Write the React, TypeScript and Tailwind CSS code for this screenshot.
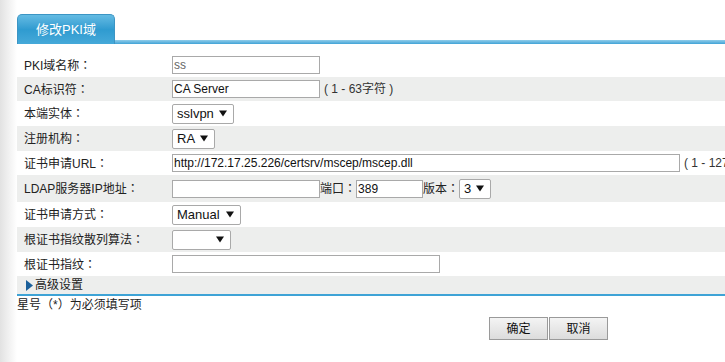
// Edit-PKI-domain form: tab header, striped label/field rows, footer note + buttons.

const FONT = 'font-["Liberation_Sans","Noto_Sans_CJK_SC",sans-serif]'

// fullwidth colon with the glyph centred in its cell, as in the reference
function Colon() {
  return <span className='font-["Noto_Sans_CJK_TC",sans-serif]'>：</span>
}

function Arrow() {
  return (
    <svg width="8" height="7" viewBox="0 0 8 7" className="shrink-0">
      <path d="M0 0.5 H8 L4 6.5 Z" fill="#111" />
    </svg>
  )
}

function Select({ value, width }: { value: string; width: number }) {
  return (
    <div
      className="flex h-[20px] items-center justify-between rounded-[2px] border border-[#a9a9a9] bg-white pl-[4px] pr-[6px] text-[13px] text-[#111]"
      style={{ width }}
    >
      <span>{value}</span>
      <Arrow />
    </div>
  )
}

function Field({ value, width, muted }: { value: string; width: number; muted?: boolean }) {
  return (
    <input
      readOnly
      value={value}
      className={`h-[18px] border border-[#a9a9a9] bg-white px-[1px] text-[12px] outline-none ${FONT} ${
        muted ? 'text-[#666]' : 'text-[#111]'
      }`}
      style={{ width }}
    />
  )
}

function Row({
  label,
  gray,
  h,
  children,
}: {
  label: string
  gray?: boolean
  h: string
  children?: React.ReactNode
}) {
  return (
    <div className={`flex items-center whitespace-nowrap ${h} ${gray ? 'bg-[#edeeed]' : 'bg-white'}`}>
      <div className="w-[155px] shrink-0 pl-[7px] text-[12px] text-[#222]">
        {label}
        <Colon />
      </div>
      <div className="flex items-center text-[12px] text-[#222]">{children}</div>
    </div>
  )
}

export default function App() {
  return (
    <div className={`flex h-[362px] w-[725px] overflow-hidden bg-white ${FONT}`}>
      <div className="w-[17px] shrink-0 bg-gradient-to-r from-[#e2e2e2] to-white" />
      <div className="min-w-0 flex-1 pt-[14px]">
        <div className="flex items-end">
          <div className="flex h-[30px] w-[98px] items-center justify-center rounded-t-[5px] border border-b-0 border-[#3c95c4] bg-gradient-to-b from-[#63bbe3] via-[#2f9bd0] to-[#45a9d9] text-[13px] text-white">
            修改PKI域
          </div>
          <div className="h-[4px] flex-1 bg-gradient-to-b from-[#8fcdea] to-[#3ea3d6]" />
        </div>

        <div className="mt-[9px]">
          <Row label="PKI域名称" h="h-[24px]">
            <Field value="ss" width={148} muted />
          </Row>
          <Row label="CA标识符" gray h="h-[24px]">
            <Field value="CA Server" width={148} />
            <span className="ml-[4px] text-[#333]">( 1 - 63字符 )</span>
          </Row>
          <Row label="本端实体" h="h-[25px]">
            <Select value="sslvpn" width={62} />
          </Row>
          <Row label="注册机构" gray h="h-[25px]">
            <Select value="RA" width={43} />
          </Row>
          <Row label="证书申请URL" h="h-[24px]">
            <Field value="http://172.17.25.226/certsrv/mscep/mscep.dll" width={508} />
            <span className="ml-[4px] text-[#333]">( 1 - 127字符 )</span>
          </Row>
          <Row label="LDAP服务器IP地址" gray h="h-[27px]">
            <Field value="" width={148} />
            <span>
              端口
              <Colon />
            </span>
            <Field value="389" width={67} />
            <span>
              版本
              <Colon />
            </span>
            <Select value="3" width={32} />
          </Row>
          <Row label="证书申请方式" h="h-[25px]">
            <Select value="Manual" width={69} />
          </Row>
          <Row label="根证书指纹散列算法" gray h="h-[25px]">
            <Select value="" width={59} />
          </Row>
          <Row label="根证书指纹" h="h-[24px]">
            <Field value="" width={268} />
          </Row>
          <div className="flex h-[18px] items-center bg-[#edeeed] pl-[9px] text-[12px] text-[#222]">
            <svg width="7" height="11" viewBox="0 0 7 11" className="mr-[2px]">
              <path d="M0 0 L7 5.5 L0 11 Z" fill="#1a5f9a" />
            </svg>
            高级设置
          </div>
          <div className="h-[2px] bg-[#3ea3d6]" />
        </div>

        <div className="mt-[1px] text-[12px] leading-[16px] text-[#222]">星号（*）为必须填写项</div>

        <div className="ml-[472px] mt-[4px] flex gap-[1px]">
          <button className="h-[23px] w-[59px] border border-[#9a9a9a] bg-gradient-to-b from-[#f4f4f4] to-[#dcdcdc] text-[12px] text-[#111]">
            确定
          </button>
          <button className="h-[23px] w-[59px] border border-[#9a9a9a] bg-gradient-to-b from-[#f4f4f4] to-[#dcdcdc] text-[12px] text-[#111]">
            取消
          </button>
        </div>
      </div>
    </div>
  )
}
